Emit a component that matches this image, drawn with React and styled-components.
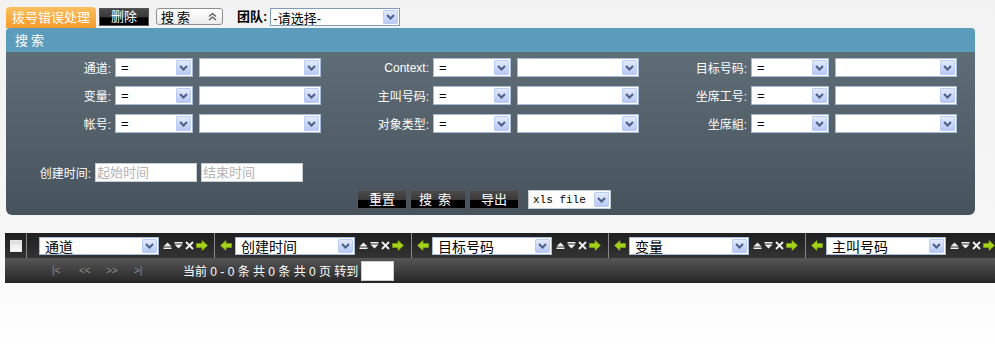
import React from "react";
import styled, { createGlobalStyle } from "styled-components";

const Global = createGlobalStyle`
  html, body { margin: 0; padding: 0; overflow: hidden; }
  body {
    width: 995px; height: 349px;
    background: linear-gradient(#f2f2f2 0, #f6f6f6 215px, #ffffff 349px);
    font-family: "Liberation Sans", "Noto Sans CJK SC", sans-serif;
    font-size: 12px;
  }
`;

const Page = styled.div`
  width: 995px;
  height: 349px;
  overflow: hidden;
`;

const TopBar = styled.div`
  display: flex;
  align-items: flex-start;
  padding: 7px 0 0 6px;
  height: 21px;
`;

const Tab = styled.div`
  width: 90px;
  height: 21px;
  border-radius: 4px 4px 0 0;
  background: linear-gradient(#fbbf5e, #f79a2c);
  color: #fff;
  font-size: 13px;
  line-height: 22px;
  text-align: center;
`;

const BlackButton = styled.div`
  width: ${p => p.$w || 50}px;
  height: ${p => p.$h || 18}px;
  margin-left: ${p => p.$ml || 0}px;
  margin-top: ${p => p.$mt || 0}px;
  box-sizing: border-box;
  border: 1px solid #555;
  background: linear-gradient(#4a4a4a 0, #3a3a3a 50%, #000 55%, #000 100%);
  color: #fff;
  font-size: 13px;
  line-height: ${p => (p.$h || 18) - 2}px;
  text-align: center;
  letter-spacing: ${p => p.$ls || 0}px;
  flex-shrink: 0;
`;

const MiniSelect = styled.div`
  margin: 1px 0 0 7px;
  width: 67px;
  height: 17px;
  box-sizing: border-box;
  border: 1px solid #8e8e8e;
  border-radius: 3px;
  background: linear-gradient(#fff, #ececec);
  display: flex;
  align-items: center;
  justify-content: space-between;
  padding: 0 5px 0 4px;
  font-size: 13px;
  color: #000;
  letter-spacing: 3px;
`;

const TeamLabel = styled.div`
  margin: 2px 3px 0 14px;
  font-weight: bold;
  font-size: 13px;
  line-height: 16px;
`;

const SelectBox = styled.div`
  width: ${p => p.$w}px;
  height: ${p => p.$h || 19}px;
  box-sizing: border-box;
  border: 1px solid ${p => p.$border || "#a7bbd9"};
  background: #fff;
  display: flex;
  align-items: center;
  padding: 1px;
  flex-shrink: 0;
  margin-top: ${p => p.$mt || 0}px;
  margin-right: ${p => p.$mr || 0}px;
`;

const SelectText = styled.span`
  flex: 1;
  padding-left: ${p => p.$pl || 4}px;
  font-size: ${p => p.$fs || 13}px;
  font-family: ${p => (p.$mono ? `"Liberation Mono", monospace` : "inherit")};
  color: #000;
  white-space: nowrap;
  overflow: hidden;
`;

const ArrowBox = styled.span`
  width: 15px;
  height: 100%;
  box-sizing: border-box;
  border: 1px solid #bccdf5;
  border-radius: 1px;
  background: linear-gradient(#e3eafd, #b8c9f4);
  display: flex;
  align-items: center;
  justify-content: center;
  flex-shrink: 0;
`;

function Chevron() {
  return (
    <svg width="9" height="6" viewBox="0 0 9 6">
      <path d="M1 1 L4.5 4.5 L8 1" fill="none" stroke="#4c5f86" strokeWidth="2" />
    </svg>
  );
}

function Select({ w, h, text, fs, mono, border, mr, mt, pl }) {
  return (
    <SelectBox $w={w} $h={h} $border={border} $mr={mr} $mt={mt}>
      <SelectText $fs={fs} $mono={mono} $pl={pl}>{text}</SelectText>
      <ArrowBox><Chevron /></ArrowBox>
    </SelectBox>
  );
}

const Panel = styled.div`
  width: 969px;
  margin-left: 6px;
  border-radius: 4px 4px 6px 6px;
  overflow: hidden;
`;

const PanelHead = styled.div`
  height: 24px;
  background: #5b9bbb;
  color: #fff;
  font-size: 13px;
  line-height: 25px;
  padding-left: 9px;
  letter-spacing: 3px;
`;

const PanelBody = styled.div`
  background: linear-gradient(#5f6d77, #47535c);
  padding: 6px 0 6px 0;
`;

const FilterGrid = styled.div`
  display: grid;
  grid-template-columns: repeat(3, 318px);
  row-gap: 9px;
`;

const FilterCell = styled.div`
  display: flex;
  align-items: center;
`;

const Label = styled.div`
  width: ${p => p.$w || 105}px;
  margin-right: 4px;
  text-align: right;
  color: #fff;
  font-size: 12px;
  white-space: nowrap;
  flex-shrink: 0;
`;

const DateRow = styled.div`
  display: flex;
  align-items: center;
  margin-top: 30px;
`;

const DateInput = styled.div`
  width: 102px;
  height: 19px;
  box-sizing: border-box;
  border: 1px solid #c8ced6;
  background: #fff;
  color: #b2b2b2;
  font-size: 13px;
  line-height: 17px;
  padding-left: 1px;
  margin-right: 4px;
`;

const ActionRow = styled.div`
  display: flex;
  align-items: center;
  margin: 8px 0 0 351px;
  gap: 3px;
`;

const Spacer = styled.span`
  width: ${p => p.$w}px;
`;

const Grid = styled.div`
  margin: 18px 0 0 5px;
  width: 1010px;
`;

const HeadRow = styled.div`
  height: 25px;
  background: linear-gradient(#1f1f1f, #333);
  display: flex;
  align-items: center;
`;

const CheckCell = styled.div`
  width: 21px;
  height: 100%;
  border-right: 1px solid #8a8a8a;
  display: flex;
  align-items: center;
  justify-content: center;
`;

const Check = styled.div`
  width: 10px;
  height: 10px;
  background: linear-gradient(#d9d9d9, #fff);
  border: 1px solid #e8e8e8;
`;

const ColCell = styled.div`
  width: ${p => p.$w}px;
  height: 100%;
  box-sizing: border-box;
  padding-left: ${p => p.$pl}px;
  border-right: 1px solid #8a8a8a;
  display: flex;
  align-items: center;
  gap: 3px;
  flex-shrink: 0;
`;

const Icons = styled.div`
  display: flex;
  align-items: center;
  gap: 2px;
  margin-left: 1px;
`;

function UpIcon() {
  return (
    <svg width="9" height="9" viewBox="0 0 9 9">
      <path d="M0.5 5.5 L4.5 1.5 L8.5 5.5 Z" fill="#f2f2f2" />
      <rect x="0.5" y="6.5" width="8" height="1.5" fill="#f2f2f2" />
    </svg>
  );
}

function DownIcon() {
  return (
    <svg width="9" height="9" viewBox="0 0 9 9">
      <rect x="0.5" y="1" width="8" height="1.5" fill="#f2f2f2" />
      <path d="M0.5 3.5 L4.5 7.5 L8.5 3.5 Z" fill="#f2f2f2" />
    </svg>
  );
}

function CloseIcon() {
  return (
    <svg width="9" height="9" viewBox="0 0 9 9">
      <path d="M1 1 L8 8 M8 1 L1 8" stroke="#f2f2f2" strokeWidth="1.8" />
    </svg>
  );
}

function GreenArrow({ left }) {
  return (
    <svg width="12" height="11" viewBox="0 0 12 11" style={{ flexShrink: 0 }}>
      <g transform={left ? "translate(12 0) scale(-1 1)" : undefined}>
        <path d="M0.5 3.5 H6 V0.5 L11.5 5.5 L6 10.5 V7.5 H0.5 Z" fill="#a3d21a" stroke="#86b10c" strokeWidth="0.6" />
      </g>
    </svg>
  );
}

function DoubleUp() {
  return (
    <svg width="9" height="9" viewBox="0 0 9 9">
      <path d="M1 4.5 L4.5 1.5 L8 4.5 M1 8 L4.5 5 L8 8" fill="none" stroke="#555" strokeWidth="1.2" />
    </svg>
  );
}

const PagerRow = styled.div`
  height: 25px;
  background: linear-gradient(#565656, #262626);
  display: flex;
  align-items: center;
  color: #fff;
`;

const PagerLinks = styled.div`
  display: flex;
  margin-left: 47px;
  width: 131px;
  font-size: 10px;
  color: #8d8d8d;
`;

const PagerLink = styled.span`
  width: ${p => p.$w}px;
`;

const PagerText = styled.span`
  font-size: 12px;
  white-space: pre;
`;

const JumpInput = styled.div`
  width: 33px;
  height: 20px;
  background: #fff;
  border: 1px solid #ccc;
  box-sizing: border-box;
  margin-left: 3px;
`;

const filters = [
  ["通道:", "Context:", "目标号码:"],
  ["变量:", "主叫号码:", "坐席工号:"],
  ["帐号:", "对象类型:", "坐席組:"],
];

const columns = ["通道", "创建时间", "目标号码", "变量", "主叫号码"];

export default function App() {
  return (
    <Page>
      <Global />
      <TopBar>
        <Tab>拨号错误处理</Tab>
        <BlackButton $w={50} $h={18} $ml={3} $mt={1}>删除</BlackButton>
        <MiniSelect>
          <span>搜索</span>
          <DoubleUp />
        </MiniSelect>
        <TeamLabel>团队:</TeamLabel>
        <Select w={130} h={18} mt={1} border="#7f9db9" text="-请选择-" pl={1} />
      </TopBar>

      <Panel>
        <PanelHead>搜索</PanelHead>
        <PanelBody>
          <FilterGrid>
            {filters.flat().map(label => (
              <FilterCell key={label}>
                <Label>{label}</Label>
                <Select w={78} text="=" mr={6} />
                <Select w={122} text="" />
              </FilterCell>
            ))}
          </FilterGrid>
          <DateRow>
            <Label $w={85}>创建时间:</Label>
            <DateInput>起始时间</DateInput>
            <DateInput>结束时间</DateInput>
          </DateRow>
          <ActionRow>
            <BlackButton $w={50} $h={19}>重置</BlackButton>
            <BlackButton $w={56} $h={19} $ls={6}>搜索</BlackButton>
            <BlackButton $w={50} $h={19}>导出</BlackButton>
            <Spacer $w={3} />
            <Select w={83} h={19} text="xls file" mono fs={11} pl={3} border="#c8ced6" />
          </ActionRow>
        </PanelBody>
      </Panel>

      <Grid>
        <HeadRow>
          <CheckCell><Check /></CheckCell>
          {columns.map((c, i) => (
            <ColCell key={c} $w={i === 0 ? 188 : 197} $pl={i === 0 ? 12 : 5}>
              {i > 0 && <GreenArrow left />}
              <Select w={120} h={18} text={c} fs={14} border="#a7bbd9" />
              <Icons>
                <UpIcon />
                <DownIcon />
                <CloseIcon />
                <GreenArrow />
              </Icons>
            </ColCell>
          ))}
        </HeadRow>
        <PagerRow>
          <PagerLinks>
            <PagerLink $w={27}>|&lt;</PagerLink>
            <PagerLink $w={27}>&lt;&lt;</PagerLink>
            <PagerLink $w={28}>&gt;&gt;</PagerLink>
            <PagerLink $w={20}>&gt;|</PagerLink>
          </PagerLinks>
          <PagerText>当前 0 - 0 条 共 0 条 共 0 页 转到</PagerText>
          <JumpInput />
        </PagerRow>
      </Grid>
    </Page>
  );
}
